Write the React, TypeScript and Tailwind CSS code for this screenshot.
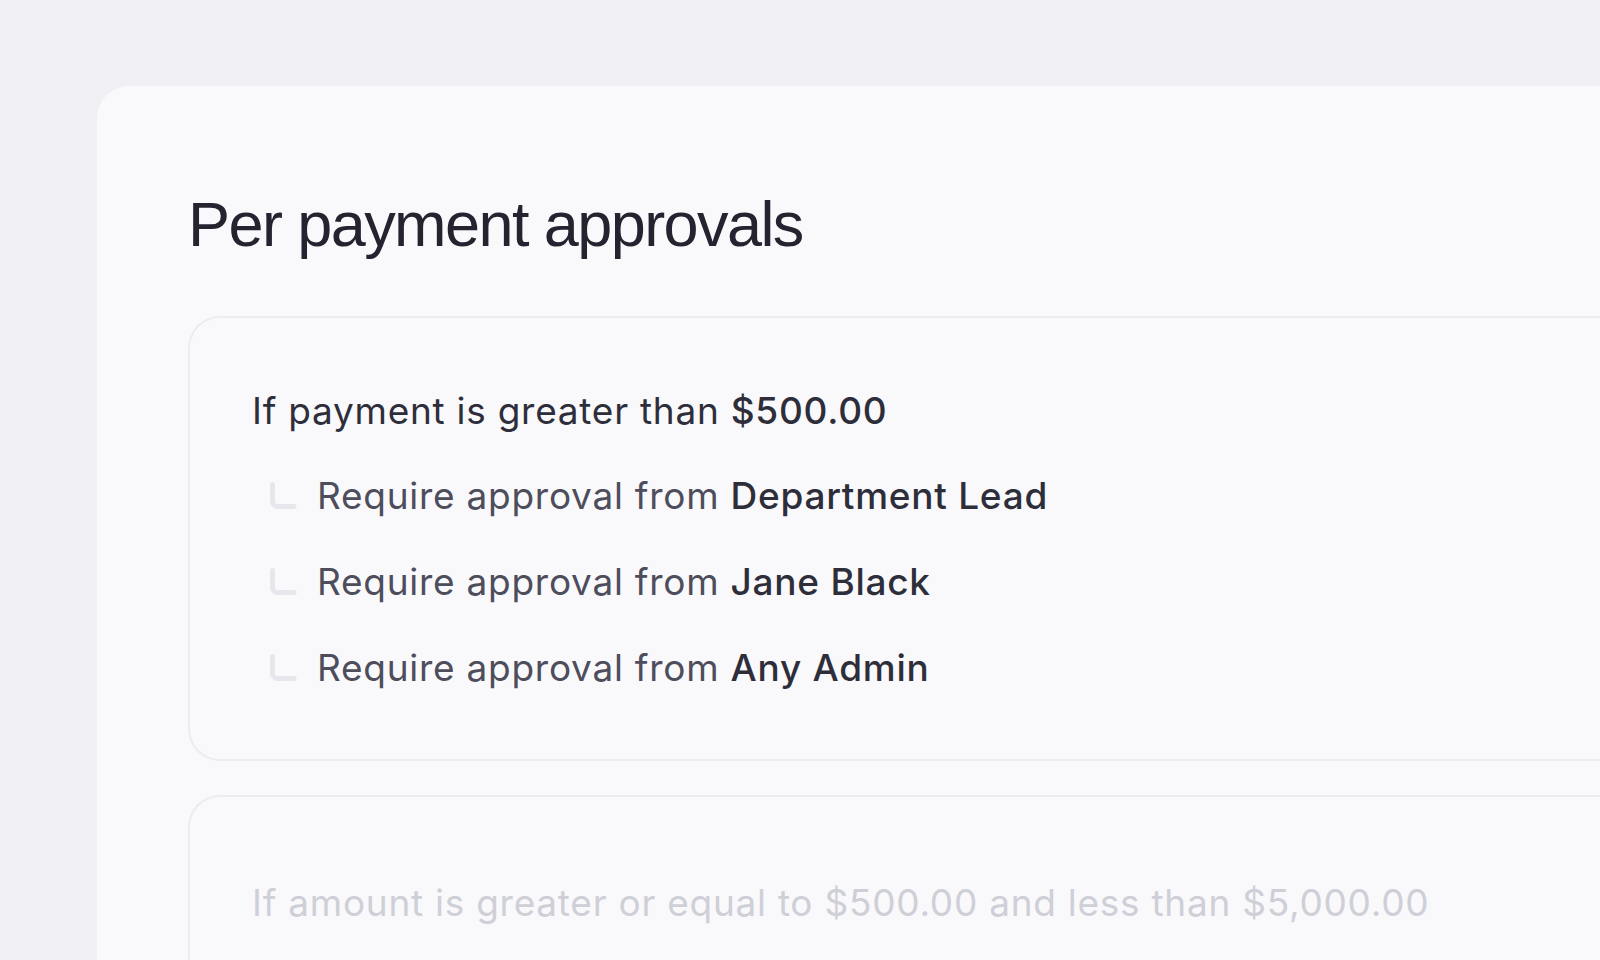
import React from 'react';

type Approver = { name: string };

const approvers: Approver[] = [
  { name: 'Department Lead' },
  { name: 'Jane Black' },
  { name: 'Any Admin' },
];

const bodyFont = "font-['Inter','Noto_Sans',sans-serif]";
const ruleText = 'text-[37px] leading-[43px] tracking-[0.02em]';

function BranchMark() {
  return (
    <svg width="28" height="28" viewBox="0 0 28 28" fill="none" className="shrink-0">
      <path
        d="M3.5 2.5V19.5a5 5 0 0 0 5 5H25"
        stroke="#e6e6ec"
        strokeWidth="5"
        strokeLinecap="round"
      />
    </svg>
  );
}

function ApproverRow({ name }: Approver) {
  return (
    <div className="flex items-center gap-[20px] pl-[17px]">
      <BranchMark />
      <p className={`${ruleText} text-[#4d4d5c]`}>
        Require approval from <span className="font-medium text-[#2e2e3b]">{name}</span>
      </p>
    </div>
  );
}

export default function App() {
  return (
    <div className={`h-[960px] w-[1600px] overflow-hidden bg-[#efeff4] ${bodyFont}`}>
      <div className="ml-[97px] mt-[86px] w-[1600px] h-[900px] rounded-tl-[32px] bg-[#f9f9fb] pl-[91px] pt-[107px]">
        <h1 className="font-['Liberation_Sans','Arial',sans-serif] text-[63px] leading-[63px] tracking-[-0.025em] text-[#24232f]">
          Per payment approvals
        </h1>

        <div className="mt-[60px] flex flex-col gap-[34px]">
          {/* active rule */}
          <div className="w-full rounded-l-[32px] border-2 border-r-0 border-[#ececf0] pl-[62px] pt-[71px] pb-[70px]">
            <p className={`${ruleText} text-[#2e2e3b]`}>
              If payment is greater than <span className="font-medium">$500.00</span>
            </p>
            <div className="mt-[42px] flex flex-col gap-[43px]">
              {approvers.map(a => (
                <ApproverRow key={a.name} name={a.name} />
              ))}
            </div>
          </div>

          {/* next rule, dimmed */}
          <div className="w-full h-[300px] rounded-l-[32px] border-2 border-r-0 border-[#ececf0] pl-[62px] pt-[84px]">
            <p className={`${ruleText} text-[#cfcfd7]`}>
              If amount is greater or equal to $500.00 and less than $5,000.00
            </p>
          </div>
        </div>
      </div>
    </div>
  );
}
